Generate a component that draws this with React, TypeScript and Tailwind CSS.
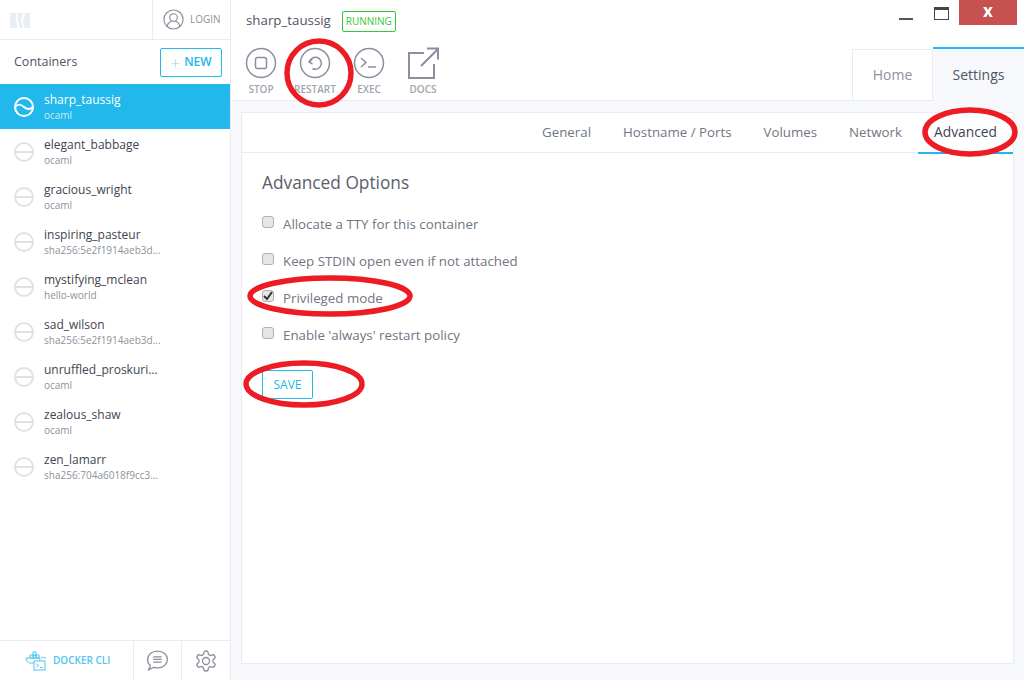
import React from 'react';

const font = { fontFamily: '"Open Sans", "Noto Sans", sans-serif' };

const containers = [
  { name: 'sharp_taussig', image: 'ocaml', active: true },
  { name: 'elegant_babbage', image: 'ocaml' },
  { name: 'gracious_wright', image: 'ocaml' },
  { name: 'inspiring_pasteur', image: 'sha256:5e2f1914aeb3d...' },
  { name: 'mystifying_mclean', image: 'hello-world' },
  { name: 'sad_wilson', image: 'sha256:5e2f1914aeb3d...' },
  { name: 'unruffled_proskuri...', image: 'ocaml' },
  { name: 'zealous_shaw', image: 'ocaml' },
  { name: 'zen_lamarr', image: 'sha256:704a6018f9cc3...' },
];

const options = [
  { label: 'Allocate a TTY for this container', checked: false },
  { label: 'Keep STDIN open even if not attached', checked: false },
  { label: 'Privileged mode', checked: true },
  { label: "Enable 'always' restart policy", checked: false },
];

const StatusIcon = ({ active }: { active?: boolean }) => (
  <svg width="20" height="20" viewBox="0 0 20 20" fill="none" stroke={active ? '#ffffff' : '#dfe3e4'} strokeWidth="2">
    <circle cx="10" cy="10" r="9" />
    {active ? <path d="M1 10c3-3.500 5.500-3 9 0s6 3 9 0" /> : <path d="M1 10h18" />}
  </svg>
);

const ActionButton = ({ label, children }: { label: string; children: React.ReactNode }) => (
  <div className="flex flex-col items-center w-[54px]">
    <div className="h-[33px] flex items-center justify-center">{children}</div>
    <span className="mt-[3px] text-[10px] leading-[14px] font-semibold text-[#a0a6ad]">{label}</span>
  </div>
);

const Ring = ({ children }: { children: React.ReactNode }) => (
  <svg width="32" height="32" viewBox="0 0 32 32" fill="none" stroke="#8a8f9c" strokeWidth="1.500">
    <circle cx="16" cy="16" r="14.500" />
    {children}
  </svg>
);

const Marks = () => (
  <svg className="absolute left-0 top-0 pointer-events-none" width="1024" height="680" fill="none" stroke="#ed1c24" strokeWidth="5.500">
    <ellipse cx="319" cy="73" rx="32" ry="32" />
    <ellipse cx="970" cy="132" rx="45" ry="22" />
    <ellipse cx="330" cy="296" rx="80" ry="18" />
    <ellipse cx="304" cy="384" rx="58" ry="21" />
  </svg>
);

export default function App() {
  return (
    <div className="relative flex w-[1024px] h-[680px] overflow-hidden bg-[#f6f8fc] text-[#4a4f5a]" style={font}>
      <aside className="flex flex-col w-[231px] shrink-0 bg-white border-r border-[#e8edf5]">
        <div className="flex h-[40px] shrink-0 border-b border-[#e8edf5]">
          <div className="flex-1 pl-[10px] pt-[13px]">
            <svg width="20" height="16" viewBox="0 0 20 16">
              <rect width="20" height="15" fill="#e9edf4" />
              <path d="M6 0h1.500v7L10 15H8L6 8zM13 0h1.500v4l-2 5 2 6H13l-2-6z" fill="#ffffff" />
            </svg>
          </div>
          <div className="flex items-center w-[78px] pl-[10px] border-l border-[#e8edf5]">
            <svg width="21" height="21" viewBox="0 0 22 22" fill="none" stroke="#8a8f9c" strokeWidth="1.200">
              <circle cx="11" cy="11" r="10" />
              <circle cx="11" cy="9" r="4" />
              <path d="M4.500 18.500c0-4 3-5 4-5.500M17.500 18.500c0-4-3-5-4-5.500" />
            </svg>
            <span className="ml-[6px] text-[10px] font-medium text-[#8d929b]">LOGIN</span>
          </div>
        </div>
        <div className="flex items-center justify-between h-[44px] shrink-0 pl-[14px] pr-[8px]">
          <span className="text-[12.500px] text-[#4f5562]">Containers</span>
          <button className="flex items-center justify-center w-[62px] h-[29px] border border-[#22b8eb] rounded-[2px] text-[12px] font-semibold text-[#22b8eb]">
            <span className="mr-[4px] font-light text-[#8ed8f3] text-[17px] leading-none">+</span>NEW
          </button>
        </div>
        <div className="flex-1">
          {containers.map((c) => (
            <div key={c.name} className={`flex items-center h-[45px] pl-[14px] ${c.active ? 'bg-[#22b8eb]' : ''}`}>
              <StatusIcon active={c.active} />
              <div className="ml-[10px]">
                <div className={`text-[12px] leading-[16px] ${c.active ? 'text-white' : 'text-[#3f4450]'}`}>{c.name}</div>
                <div className={`text-[10px] leading-[14px] ${c.active ? 'text-[#c5ecfa]' : 'text-[#8d929b]'}`}>{c.image}</div>
              </div>
            </div>
          ))}
        </div>
        <div className="flex h-[40px] shrink-0 border-t border-[#e8edf5]">
          <div className="flex flex-1 items-center pl-[25px]">
            <svg width="22" height="20" viewBox="0 0 22 20" fill="none" stroke="#4fc6ee" strokeWidth="1">
              <path d="M1 7h14c0 4-3 5-5 5H5c-2 0-4-2-4-5zM5 4h3v3H5zM8 4h3v3H8zM8 1h3v3H8zM11 4h3v3h-3zM16 7c1-1 3-1 5 0" />
              <rect x="9" y="10" width="11" height="9" fill="#ffffff" />
              <path d="M11.500 13l2 1.500-2 1.500M15 16.500h2.500" />
            </svg>
            <span className="ml-[6px] text-[10px] font-semibold text-[#4fc6ee]">DOCKER CLI</span>
          </div>
          <div className="flex items-center justify-center w-[48px] border-l border-[#e8edf5]">
            <svg width="23" height="23" viewBox="0 0 22 22" fill="none" stroke="#8a8f9c" strokeWidth="1.200">
              <path d="M11 2c5.500 0 9.500 3.500 9.500 8s-4 8-9.500 8c-1.200 0-2.300-.2-3.300-.5L2.500 20l1.700-4.200C2.500 14.400 1.500 12.300 1.500 10c0-4.500 4-8 9.500-8z" />
              <path d="M7 7.500h8M7 10h8M7 12.500h8" />
            </svg>
          </div>
          <div className="flex items-center justify-center w-[49px] border-l border-[#e8edf5]">
            <svg width="24" height="24" viewBox="0 0 24 24" fill="none" stroke="#8a8f9c" strokeWidth="1.300">
              <path d="M12.220 2h-.44a2 2 0 0 0-2 2v.18a2 2 0 0 1-1 1.730l-.43.250a2 2 0 0 1-2 0l-.15-.08a2 2 0 0 0-2.730.730l-.22.380a2 2 0 0 0 .730 2.730l.150.100a2 2 0 0 1 1 1.720v.510a2 2 0 0 1-1 1.740l-.15.090a2 2 0 0 0-.730 2.730l.22.380a2 2 0 0 0 2.730.730l.15-.08a2 2 0 0 1 2 0l.43.250a2 2 0 0 1 1 1.730V20a2 2 0 0 0 2 2h.44a2 2 0 0 0 2-2v-.18a2 2 0 0 1 1-1.730l.43-.25a2 2 0 0 1 2 0l.15.080a2 2 0 0 0 2.730-.730l.22-.39a2 2 0 0 0-.730-2.730l-.15-.08a2 2 0 0 1-1-1.740v-.5a2 2 0 0 1 1-1.740l.15-.09a2 2 0 0 0 .730-2.730l-.22-.38a2 2 0 0 0-2.730-.730l-.15.080a2 2 0 0 1-2 0l-.43-.25a2 2 0 0 1-1-1.730V4a2 2 0 0 0-2-2z" />
              <circle cx="12" cy="12" r="3.500" />
            </svg>
          </div>
        </div>
      </aside>

      <main className="flex flex-col flex-1 min-w-0">
        <div className="flex justify-between h-[101px] shrink-0 bg-white border-b border-[#e8edf5]">
          <div className="pl-[15px]">
            <div className="flex items-center h-[42px]">
              <span className="text-[13.300px] font-medium text-[#4f5562]">sharp_taussig</span>
              <span className="ml-[11px] flex items-center justify-center w-[54px] h-[21px] border border-[#34c934] rounded-[2px] text-[10px] font-medium text-[#34c934]">RUNNING</span>
            </div>
            <div className="flex -ml-[12px] mt-[4px]">
              <ActionButton label="STOP">
                <Ring><rect x="10.500" y="10.500" width="11" height="11" rx="2" /></Ring>
              </ActionButton>
              <ActionButton label="RESTART">
                <Ring>
                  <path d="M10.500 15a6 6 0 1 1 3 6.500" />
                  <path d="M13.500 12l-3.500 3 3.500 2" />
                </Ring>
              </ActionButton>
              <ActionButton label="EXEC">
                <Ring>
                  <path d="M8 11l5 4.500-5 4.500M15 20h8" />
                </Ring>
              </ActionButton>
              <ActionButton label="DOCS">
                <svg width="32" height="32" viewBox="0 0 32 32" fill="none" stroke="#8a8f9c" strokeWidth="2">
                  <path d="M17 6H2v25h25V17M14 19L31 2M20 1.500h11v11" />
                </svg>
              </ActionButton>
            </div>
          </div>
          <div className="flex flex-col items-end">
            <div className="flex h-[47px] items-start pr-[7px]">
              <div className="mt-[18px] w-[14px] h-[2px] bg-[#555555]" />
              <div className="ml-[21px] mt-[7px] w-[15px] h-[13px] border border-[#444444] border-t-[3px]" />
              <div className="ml-[10px] w-[58px] h-[25px] bg-[#c75050] text-white text-center text-[17px] leading-[22px] font-bold">x</div>
            </div>
            <div className="flex h-[54px]">
              <div className="flex items-center justify-center w-[81px] mt-[2px] border border-b-0 border-[#e8edf5] text-[14px] font-medium text-[#8d929b]">Home</div>
              <div className="flex items-center justify-center w-[91px] border-t-2 border-[#22b8eb] bg-[#f6f8fc] text-[14px] font-medium text-[#4f5562] -mb-px">Settings</div>
            </div>
          </div>
        </div>

        <div className="flex-1 pt-[11px] pb-[16px] pl-[10px] pr-[10px]">
          <div className="h-full bg-white border border-[#e8edf5]">
            <div className="flex justify-end h-[40px] border-b border-[#e8edf5]">
              {['General', 'Hostname / Ports', 'Volumes', 'Network'].map((t) => (
                <div key={t} className="flex items-center px-[16px] text-[13.300px] text-[#717682]">{t}</div>
              ))}
              <div className="flex items-center px-[16px] h-[41px] border-b-2 border-[#22b8eb] text-[13.800px] text-[#3f4450]">Advanced</div>
            </div>
            <div className="pl-[20px] pt-[19px]">
              <h2 className="text-[17.300px] leading-[22px] text-[#5b606b]">Advanced Options</h2>
              <div className="mt-[12px] flex flex-col">
                {options.map((o) => (
                  <label key={o.label} className="flex items-center h-[37px] text-[13.300px] text-[#717682]">
                    <span className="flex items-center justify-center w-[12px] h-[12px] -mt-[5px] rounded-[3px] border border-[#b0b0b0] bg-[#e6e6e6]">
                      {o.checked && (
                        <svg width="10" height="10" viewBox="0 0 10 10" fill="none" stroke="#333333" strokeWidth="2">
                          <path d="M1 5l3 3 5-7" />
                        </svg>
                      )}
                    </span>
                    <span className="ml-[9px]">{o.label}</span>
                  </label>
                ))}
              </div>
              <button className="mt-[16px] w-[51px] h-[29px] border border-[#22b8eb] rounded-[2px] text-[12px] font-medium text-[#22b8eb]">SAVE</button>
            </div>
          </div>
        </div>
      </main>
      <Marks />
    </div>
  );
}
